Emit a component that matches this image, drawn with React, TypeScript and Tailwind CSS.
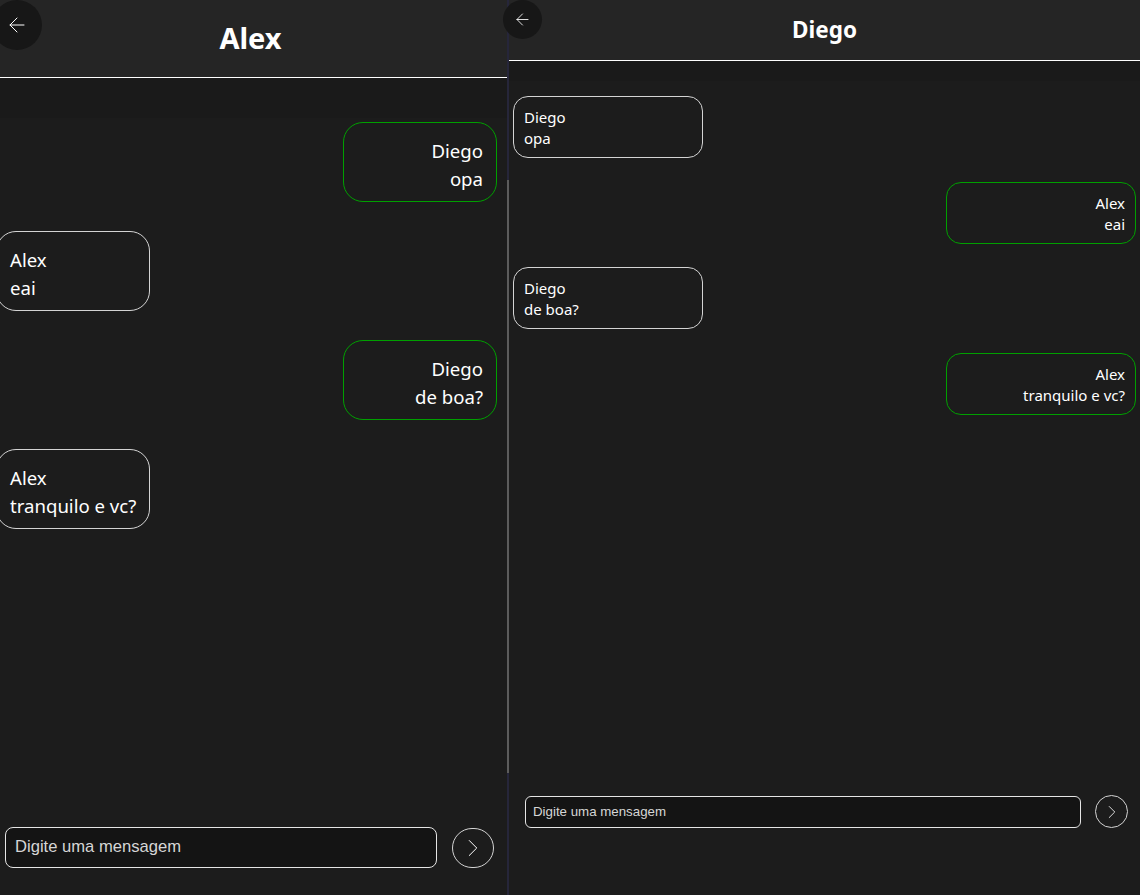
import { ArrowLeft, ChevronRight } from 'lucide-react'
import React from 'react'

type Message = { author: string; text: string; mine: boolean }

const fontUi = 'font-["Noto_Sans","Open_Sans",sans-serif]'

// Big window (zoomed in), Alex's view
const alexMessages: Message[] = [
  { author: 'Diego', text: 'opa', mine: true },
  { author: 'Alex', text: 'eai', mine: false },
  { author: 'Diego', text: 'de boa?', mine: true },
  { author: 'Alex', text: 'tranquilo e vc?', mine: false }
]

// Small window, Diego's view
const diegoMessages: Message[] = [
  { author: 'Diego', text: 'opa', mine: false },
  { author: 'Alex', text: 'eai', mine: true },
  { author: 'Diego', text: 'de boa?', mine: false },
  { author: 'Alex', text: 'tranquilo e vc?', mine: true }
]

const LargeChat: React.FC = () => (
  <div className={`flex flex-col w-[507px] h-full bg-[#1c1c1c] text-white ${fontUi}`}>
    <header className="relative h-[78px] shrink-0 bg-[#252525] border-b border-white flex items-center justify-center">
      <button className="absolute -left-[8px] top-0 w-[50px] h-[50px] rounded-full bg-[#171717] flex items-center justify-center">
        <ArrowLeft size={24} strokeWidth={1} className="text-white" />
      </button>
      <h1 className="text-[29px] font-bold leading-none -mt-[2px] -ml-[6px]">Alex</h1>
    </header>

    <div className="h-[40px] shrink-0 bg-[#1a1a1a]" />

    <div className="flex-1 flex flex-col gap-[29px] pt-[4px]">
      {alexMessages.map((m, i) => (
        <div
          key={i}
          className={`w-[154px] h-[80px] rounded-[20px] border px-[13px] pt-[14px] text-[18.6px] leading-[28px] whitespace-nowrap ${
            m.mine ? 'self-end mr-[10px] border-[#00a000] text-right' : 'self-start -ml-[4px] border-[#d4d4d4] text-left'
          }`}
        >
          <div>{m.author}</div>
          <div>{m.text}</div>
        </div>
      ))}
    </div>

    <div className="flex items-center gap-[15px] pl-[5px] pr-[13px] pb-[27px]">
      <div className="flex-1 h-[41px] rounded-[8px] border border-[#e5e5e5] bg-[#141414] flex items-center px-[9px]">
        <span className='font-["Liberation_Sans",Arial,sans-serif] text-[16.6px] text-[#d6d6d6]'>Digite uma mensagem</span>
      </div>
      <button className="w-[42px] h-[40px] rounded-full border border-[#d4d4d4] flex items-center justify-center">
        <ChevronRight size={30} strokeWidth={0.8} className="text-white" />
      </button>
    </div>
  </div>
)

const ScrollTrack: React.FC = () => (
  <div className="w-[2px] h-full flex flex-col shrink-0">
    <div className="h-[180px] bg-[#26263a]" />
    <div className="h-[593px] bg-[#5c5c5c]" />
    <div className="flex-1 bg-[#26263a]" />
  </div>
)

const SmallChat: React.FC = () => (
  <div className={`flex flex-col flex-1 h-full bg-[#1c1c1c] text-white ${fontUi}`}>
    <header className="relative h-[61px] shrink-0 bg-[#252525] border-b border-white flex items-center justify-center">
      <button className="absolute -left-[6px] top-0 w-[39px] h-[39px] rounded-full bg-[#171717] flex items-center justify-center">
        <ArrowLeft size={19} strokeWidth={1.1} className="text-white" />
      </button>
      <h1 className="text-[22.5px] font-bold leading-none">Diego</h1>
    </header>

    <div className="h-[20px] shrink-0 bg-[#1a1a1a]" />

    <div className="flex-1 flex flex-col gap-[23.5px] pt-[15px]">
      {diegoMessages.map((m, i) => (
        <div
          key={i}
          className={`w-[190px] h-[62px] rounded-[15px] border px-[10px] pt-[10px] text-[15px] leading-[21px] whitespace-nowrap ${
            m.mine ? 'self-end mr-[4px] border-[#00a000] text-right' : 'self-start ml-[4px] border-[#d4d4d4] text-left'
          }`}
        >
          <div>{m.author}</div>
          <div>{m.text}</div>
        </div>
      ))}
    </div>

    <div className="flex items-center gap-[14px] pl-[16px] pr-[12px] pb-[67px]">
      <div className="flex-1 h-[32px] rounded-[6px] border border-[#e5e5e5] bg-[#141414] flex items-center px-[7px]">
        <span className='font-["Liberation_Sans",Arial,sans-serif] text-[13.3px] text-[#d6d6d6]'>Digite uma mensagem</span>
      </div>
      <button className="w-[33px] h-[33px] rounded-full border border-[#d4d4d4] flex items-center justify-center">
        <ChevronRight size={22} strokeWidth={0.9} className="text-white" />
      </button>
    </div>
  </div>
)

export default function App() {
  return (
    <div className="flex w-[1140px] h-[895px] overflow-hidden bg-[#1c1c1c]">
      <LargeChat />
      <ScrollTrack />
      <SmallChat />
    </div>
  )
}
